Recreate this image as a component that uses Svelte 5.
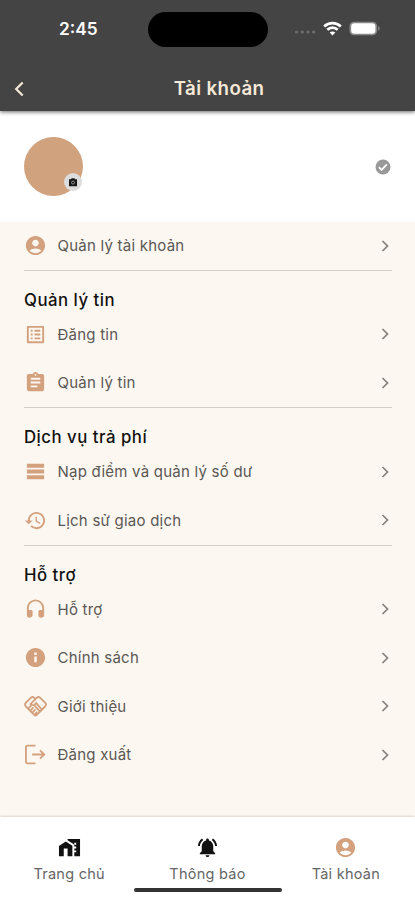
<script>
  const person = 'M12 2C6.48 2 2 6.48 2 12s4.48 10 10 10 10-4.48 10-10S17.52 2 12 2zm0 4c1.93 0 3.5 1.57 3.5 3.5S13.93 13 12 13s-3.5-1.57-3.5-3.5S10.07 6 12 6zm0 14c-2.03 0-4.43-.82-6.14-2.88C7.55 15.8 9.68 15 12 15s4.45.8 6.14 2.12C16.43 19.18 14.03 20 12 20z';
  const sections = [
    { title: '', items: [{ label: 'Quản lý tài khoản', d: person }] },
    {
      title: 'Quản lý tin',
      items: [
        { label: 'Đăng tin', d: 'M19 5v14H5V5h14m1.1-2H3.9c-.5 0-.9.4-.9.9v16.2c0 .4.4.9.9.9h16.2c.4 0 .9-.5.9-.9V3.9c0-.5-.5-.9-.9-.9zM11 7h6v2h-6V7zm0 4h6v2h-6v-2zm0 4h6v2h-6zM7 7h2v2H7zm0 4h2v2H7zm0 4h2v2H7z' },
        { label: 'Quản lý tin', d: 'M19 3h-4.18C14.4 1.84 13.3 1 12 1c-1.3 0-2.4.84-2.82 2H5c-1.1 0-2 .9-2 2v14c0 1.1.9 2 2 2h14c1.1 0 2-.9 2-2V5c0-1.1-.9-2-2-2zm-7 0c.55 0 1 .45 1 1s-.45 1-1 1-1-.45-1-1 .45-1 1-1zm2 14H7v-2h7v2zm3-4H7v-2h10v2zm0-4H7V7h10v2z' }
      ]
    },
    {
      title: 'Dịch vụ trả phí',
      items: [
        { label: 'Nạp điểm và quản lý số dư', d: 'M21 8H3V4h18v4zm0 2H3v4h18v-4zm0 6H3v4h18v-4z' },
        { label: 'Lịch sử giao dịch', d: 'M13 3c-4.97 0-9 4.03-9 9H1l3.89 3.89.07.14L9 12H6c0-3.87 3.13-7 7-7s7 3.13 7 7-3.13 7-7 7c-1.93 0-3.68-.79-4.94-2.06l-1.42 1.42C8.27 19.99 10.51 21 13 21c4.97 0 9-4.03 9-9s-4.03-9-9-9zm-1 5v5l4.28 2.54.72-1.21-3.5-2.08V8H12z' }
      ]
    },
    {
      title: 'Hỗ trợ',
      items: [
        { label: 'Hỗ trợ', d: 'M12 1.5a9 9 0 0 0-9 9V18c0 1.7 1 2.5 2.500 2.500S9 19.700 9 18v-3.500c0-1.300-.8-2-2-2H5v-2c0-3.870 3.130-7 7-7s7 3.130 7 7v2h-2c-1.200 0-2 .7-2 2V18c0 1.700 1 2.500 2.500 2.500 2.500 0 3.500-.8 3.500-2.500v-7.500a9 9 0 0 0-9-9z' },
        { label: 'Chính sách', d: 'M12 2C6.480 2 2 6.480 2 12s4.480 10 10 10 10-4.480 10-10S17.520 2 12 2zm1.300 15h-2.600v-6h2.600v6zm0-7.600h-2.600V6.800h2.600v2.600z' },
        { label: 'Giới thiệu', stroke: 'M12 4.200 10.800 3C9.700 2 8 2 7 3L2 8c-1.100 1.200-1.100 2.800 0 4l8.700 8.800c.8.800 1.900.8 2.700 0L22 12c1.100-1.200 1.100-2.800 0-4l-5-5c-1.100-1-2.700-1-3.800 0L6.800 9.400c1.500 1.600 3.400 1.600 4.900 0l1-1 5.600 6.600M10.500 10.500l6 6.500M4.800 13.800l3-3M6.900 16l3-3M9 18.100l3-3M11.200 20.200l2.600-2.600' },
        { label: 'Đăng xuất', stroke: 'M12 2.800H4a2 2 0 0 0-2 2v14.400a2 2 0 0 0 2 2h8M8.500 12H21M16.700 7.700 21.200 12l-4.500 4.300' }
      ]
    }
  ];
  const tabs = [
    { label: 'Trang chủ', d: 'M8.170 5.700L1 10.480V21h5v-8h4v8h5V10.250zM10 3v1.510l2 1.330L13.730 7H15v.850l2 1.340V11h2v2h-2v2h2v2h-2v4h6V3H10zm9 6h-2V7h2v2z' },
    { label: 'Thông báo', d: 'M7.580 4.080L6.150 2.650C3.750 4.480 2.170 7.300 2.030 10.500h2c.150-2.650 1.510-4.970 3.550-6.420zm12.390 6.420h2c-.150-3.200-1.730-6.020-4.120-7.850l-1.420 1.430c2.020 1.450 3.390 3.770 3.540 6.420zM18 11c0-3.070-1.640-5.640-4.500-6.320V4c0-.830-.670-1.500-1.500-1.500s-1.500.670-1.500 1.500v.680C7.630 5.360 6 7.920 6 11v5l-2 2v1h16v-1l-2-2v-5zm-6 11c.140 0 .270-.010.400-.040.650-.140 1.180-.580 1.440-1.180.100-.240.150-.500.150-.780h-4c.010 1.100.900 2 2.010 2z' },
    { label: 'Tài khoản', d: person, active: true }
  ];
</script>

<div class="screen">
  <header>
    <div class="status">
      <div class="time">2:45</div>
      <div class="island"></div>
      <div class="signals">
        <svg class="dots" width="22" height="6" viewBox="0 0 22 6" fill="#6e6e6e"><circle cx="2.500" cy="3" r="1.600"/><circle cx="8.200" cy="3" r="1.600"/><circle cx="13.900" cy="3" r="1.600"/><circle cx="19.600" cy="3" r="1.600"/></svg>
        <svg class="wifi" width="19" height="15" viewBox="0 0 19 15" fill="none" stroke="#fff" stroke-width="2.700"><path d="M1.200 5.400c4.700-4.500 11.900-4.500 16.600 0M4.300 8.700c3-2.900 7.400-2.900 10.400 0"/><path d="M9.500 14.400 6.700 11.500c1.600-1.500 4-1.500 5.600 0z" fill="#fff" stroke="none"/></svg>
        <svg width="32" height="15" viewBox="0 0 32 15"><rect x=".5" y=".7" width="27.600" height="13.600" rx="4.400" fill="#8a8a8a"/><rect x="2.200" y="2.200" width="24.200" height="10.600" rx="3.200" fill="#fff"/><path d="M29.200 5v5c1.900-.8 1.900-4.200 0-5z" fill="#8c8c8c"/></svg>
      </div>
    </div>
    <div class="appbar">
      <svg width="12" height="16" viewBox="0 0 12 16" fill="none" stroke="#f5e9d8" stroke-width="2.200"><path d="M9.700 1.500 3.200 8l6.500 6.500"/></svg>
      <h1>Tài khoản</h1>
    </div>
  </header>

  <section class="profile">
    <div class="avatar">
      <div class="camera">
        <svg width="10" height="9" viewBox="0 0 10 9"><path d="M1 1.200h2L3.600.3h2.800L7 1.200h2v7H1z" fill="#161616"/><circle cx="5" cy="4.600" r="1.500" fill="none" stroke="#aaa" stroke-width=".8"/></svg>
      </div>
    </div>
    <svg class="verified" width="18" height="18" viewBox="0 0 24 24"><circle cx="12" cy="12" r="10" fill="#999"/><path d="m6.500 12.200 3.600 3.600 7-7.200" fill="none" stroke="#fff" stroke-width="2.400"/></svg>
  </section>

  <main>
    {#each sections as section}
      {#if section.title}<h2>{section.title}</h2>{/if}
      {#each section.items as item}
        <div class="row">
          <svg class="icon" viewBox="0 0 24 24">
            {#if item.d}<path d={item.d} fill="#d3a17e" />{:else}<path d={item.stroke} fill="none" stroke="#d3a17e" stroke-width="1.900" />{/if}
          </svg>
          <span>{item.label}</span>
          <svg class="chevron" width="10" height="14" viewBox="0 0 10 14" fill="none" stroke="#85817c" stroke-width="1.700"><path d="m2.500 2 5 5-5 5"/></svg>
        </div>
      {/each}
    {/each}
  </main>

  <nav>
    {#each tabs as tab}
      <div class="tab">
        <svg width="23" height="23" viewBox="0 0 24 24"><path d={tab.d} fill={tab.active ? '#d3a17e' : '#111'} /></svg>
        <span>{tab.label}</span>
      </div>
    {/each}
    <div class="home-indicator"></div>
  </nav>
</div>

<style>
  :global(body) { margin: 0; }
  .screen { width: 415px; height: 900px; display: flex; flex-direction: column; overflow: hidden; background: #fcf7f0; font-family: Inter, "Noto Sans", sans-serif; }
  header { height: 111px; flex: none; background: #444; position: relative; box-shadow: 0 1px 4px #0009; }
  .status { height: 58px; display: grid; grid-template-columns: 148px 120px 147px; align-items: center; }
  .time { color: #fff; font-size: 17.300px; font-weight: 600; line-height: 20px; padding-left: 59px; }
  .island { height: 35px; border-radius: 18px; background: #000; }
  .signals { display: flex; align-items: center; padding-left: 26px; margin-top: -2px; }
  .wifi { margin: 0 7px 0 7px; }
  .dots { margin-top: 8px; }
  .appbar { height: 61px; display: grid; grid-template-columns: 60px 1fr 60px; align-items: center; }
  .appbar svg { margin-left: 13px; }
  h1 { margin: 0; color: #f5e9d8; font-size: 18.700px; line-height: 24px; font-weight: 600; letter-spacing: .4px; text-align: center; padding-left: 23px; }
  .profile { height: 111px; flex: none; box-sizing: border-box; display: flex; align-items: center; justify-content: space-between; padding: 0 23px 0 24px; background: #fff; }
  .avatar { width: 59px; height: 59px; border-radius: 50%; background: #d1a27e; position: relative; }
  .camera { position: absolute; right: 1px; bottom: 5px; width: 18px; height: 18px; border-radius: 50%; background: #dcdcdc; display: flex; align-items: center; justify-content: center; }
  main { flex: 1; padding: 0 23px 0 24px; background: #fcf7f0; }
  .row { height: 48.500px; display: flex; align-items: center; }
  .row:first-child { height: 47.500px; }
  .icon { width: 23px; height: 23px; flex: none; }
  .row span { flex: 1; margin-left: 10.500px; padding-top: 1px; color: #5b5855; font-size: 15px; line-height: 22px; letter-spacing: .23px; white-space: nowrap; }
  .chevron { margin-right: 2px; }
  h2 { margin: 0; height: 40.500px; box-sizing: border-box; border-top: 1px solid #d2cec9; padding-top: 17px; font-size: 16.800px; line-height: 24px; font-weight: 500; letter-spacing: .5px; color: #111; }
  nav { height: 83px; flex: none; background: #fff; box-shadow: 0 -1px 2px #0002; position: relative; display: grid; grid-template-columns: repeat(3, 1fr); }
  .tab { display: flex; flex-direction: column; align-items: center; padding-top: 19px; color: #666; font-size: 14.500px; line-height: 20px; letter-spacing: .25px; }
  .tab span { margin-top: 5px; }
  .home-indicator { position: absolute; left: 134px; bottom: 8px; width: 148px; height: 4px; border-radius: 2px; background: #333; }
</style>
